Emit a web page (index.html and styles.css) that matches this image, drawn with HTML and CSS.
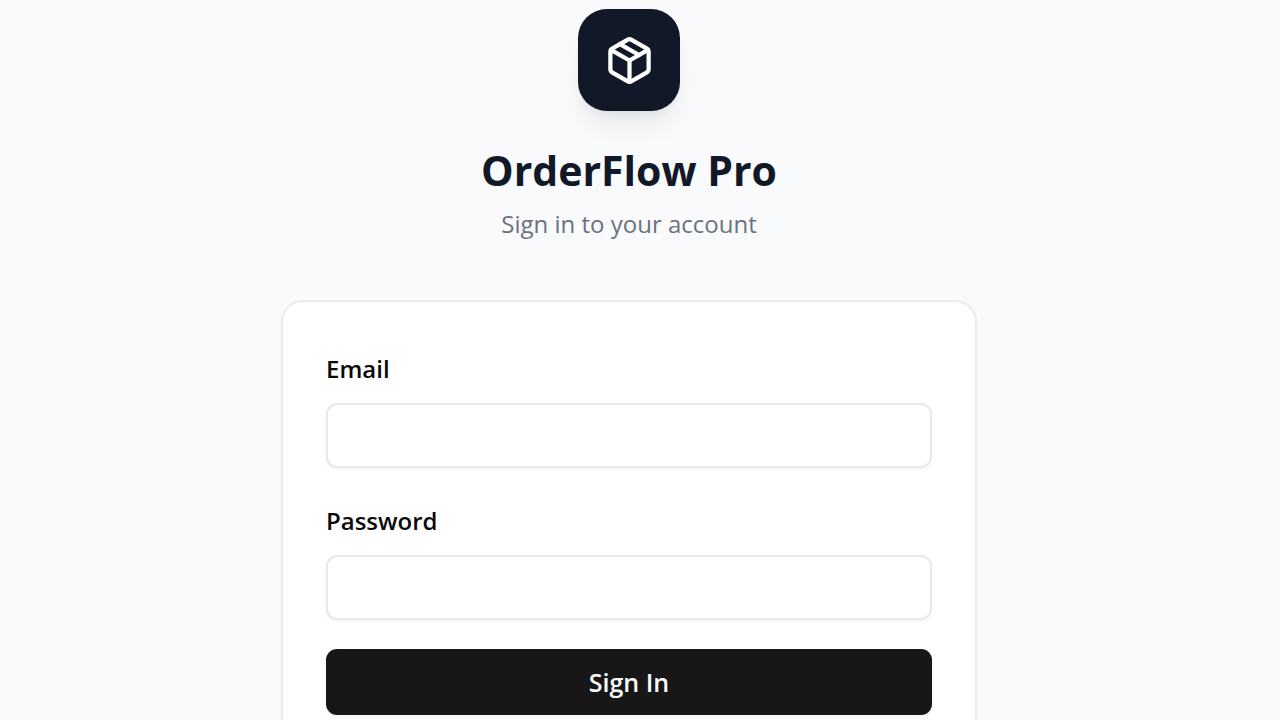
FILE: index.html
```
<!DOCTYPE html>
<html lang="en">
<head>
	<meta charset="UTF-8">
	<meta name="viewport" content="width=device-width, initial-scale=1">
	<title>OrderFlow Pro</title>
	<link rel="stylesheet" href="styles.css">
</head>
<body>
	<main class="page">
		<header class="brand">
			<div class="logo">
				<svg viewBox="0 0 24 24" aria-hidden="true">
					<path d="m7.5 4.27 9 5.15"/>
					<path d="M21 8a2 2 0 0 0-1-1.73l-7-4a2 2 0 0 0-2 0l-7 4A2 2 0 0 0 3 8v8a2 2 0 0 0 1 1.73l7 4a2 2 0 0 0 2 0l7-4A2 2 0 0 0 21 16Z"/>
					<path d="m3.3 7 8.7 5 8.7-5"/>
					<path d="M12 22V12"/>
				</svg>
			</div>
			<h1>OrderFlow Pro</h1>
			<p>Sign in to your account</p>
		</header>
		<form class="card">
			<div class="field">
				<label for="email">Email</label>
				<input type="email" id="email" name="email">
			</div>
			<div class="field">
				<label for="password">Password</label>
				<input type="password" id="password" name="password">
			</div>
			<button type="submit" class="btn">Sign In</button>
		</form>
	</main>
</body>
</html>
```
FILE: styles.css
```
*{margin:0;padding:0;box-sizing:border-box;}
body{background-color:#f9fafb;font-family:"Segoe UI","Open Sans","Noto Sans",sans-serif;color:#0a0a0a;}
.page{display:flex;flex-direction:column;align-items:center;padding:9px 22px 9px 0;}

/* logo + title */
.brand{display:flex;flex-direction:column;align-items:center;text-align:center;margin-bottom:58px;}
.logo{display:flex;align-items:center;justify-content:center;width:102px;height:102px;border-radius:29px;background-color:#111827;box-shadow:0 18px 27px -5px rgba(0,0,0,.08),0 7px 11px -7px rgba(0,0,0,.08);margin-bottom:31px;}
.logo svg{width:51px;height:51px;fill:none;stroke:#fff;stroke-width:2;stroke-linecap:round;stroke-linejoin:round;}
.brand h1{font-size:41px;line-height:56px;font-weight:700;color:#111827;}
.brand p{font-size:24px;line-height:36px;color:#6b7280;margin-top:8px;}

/* form */
.card{display:flex;flex-direction:column;gap:29px;width:100%;max-width:696px;padding:43px;background-color:#fff;border:2px solid #e9ebee;border-radius:22px;}
.field{display:flex;flex-direction:column;gap:11px;}
.field label{font-size:24px;line-height:47px;font-weight:600;}
.field input{width:100%;height:65px;padding:0 22px;font:inherit;font-size:24px;background-color:#fff;border:2px solid #e9e9e9;border-radius:11px;box-shadow:0 2px 4px rgba(0,0,0,.04);}
.btn{width:100%;height:66px;border:0;border-radius:11px;background-color:#171717;color:#fafafa;font:inherit;font-size:25px;font-weight:600;box-shadow:0 2px 4px rgba(0,0,0,.05);cursor:pointer;}
```
